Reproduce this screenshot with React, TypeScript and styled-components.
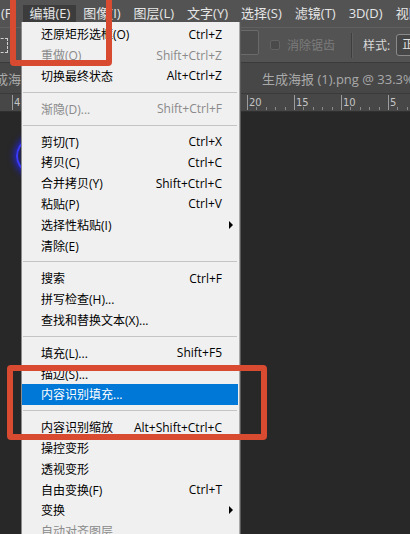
import React from "react";
import styled, { createGlobalStyle } from "styled-components";

const Global = createGlobalStyle`
  html, body { margin: 0; padding: 0; background: #282828; overflow: hidden; }
  #root { width: 410px; height: 534px; }
`;

const UI_FONT = `"Open Sans", "Noto Sans CJK SC", sans-serif`;

const Window = styled.div`
  position: relative;
  width: 410px;
  height: 534px;
  overflow: hidden;
  display: flex;
  flex-direction: column;
  background: #282828;
  font-family: ${UI_FONT};
`;

/* ---------- top menu bar ---------- */
const MenuBar = styled.div`
  flex: none;
  height: 28px;
  box-sizing: border-box;
  display: flex;
  align-items: flex-start;
  background: #535353;
  border-bottom: 1px solid #606060;
  & > * { flex: none; }
`;

const MenuTitle = styled.div<{ $active?: boolean; $shift?: number }>`
  margin-top: 5px;
  margin-left: ${(p) => p.$shift ?? 0}px;
  height: ${(p) => (p.$active ? 23 : 17)}px;
  padding: 0 6px;
  box-sizing: border-box;
  font-size: 13px;
  line-height: 17px;
  color: #e6e6e6;
  white-space: nowrap;
  background: ${(p) => (p.$active ? "#3c3c3c" : "transparent")};
`;

/* ---------- options bar ---------- */
const OptionsBar = styled.div`
  flex: none;
  height: 35px;
  box-sizing: border-box;
  display: flex;
  align-items: center;
  background: #535353;
  border-bottom: 1px solid #3a3a3a;
  font-size: 12px;
  & > * { flex: none; }
`;

const MarqueeIcon = styled.div`
  width: 14px;
  height: 13px;
  margin-left: -8px;
  border: 1px dashed #d0d0d0;
`;

const ChevronSmall = styled.svg`
  margin-left: 3px;
  margin-top: 4px;
`;

const FieldBox = styled.div`
  width: 27px;
  height: 25px;
  margin-left: 216px;
  align-self: flex-start;
  margin-top: 2px;
  box-sizing: border-box;
  border: 1px solid #6a6a6a;
  border-radius: 2px;
  background: #4c4c4c;
`;

const CheckBox = styled.div`
  width: 10px;
  height: 10px;
  margin-left: 11px;
  box-sizing: border-box;
  border: 1px solid #626262;
  border-radius: 2px;
  background: #4a4a4a;
`;

const OptLabel = styled.span<{ $disabled?: boolean; $gap: number }>`
  margin-left: ${(p) => p.$gap}px;
  color: ${(p) => (p.$disabled ? "#7c7c7c" : "#d8d8d8")};
  white-space: nowrap;
`;

const VSep = styled.div`
  width: 1px;
  height: 25px;
  margin-left: 16px;
  background: #3e3e3e;
  box-shadow: 1px 0 0 #5e5e5e;
`;

const SelectBox = styled.div`
  margin-left: 6px;
  width: 50px;
  height: 22px;
  box-sizing: border-box;
  border: 1px solid #8a8a8a;
  border-radius: 3px;
  background: #474747;
  color: #e2e2e2;
  padding-left: 5px;
  line-height: 20px;
  white-space: nowrap;
`;

/* ---------- document tabs ---------- */
const TabBar = styled.div`
  flex: none;
  height: 30px;
  display: flex;
  align-items: center;
  background: #474747;
  font-size: 13px;
  color: #a9a9a9;
  & > * { flex: none; }
`;

const DocTab = styled.div<{ $shift: number; $width?: number }>`
  margin-left: ${(p) => p.$shift}px;
  ${(p) => (p.$width ? `width: ${p.$width}px;` : "")}
  white-space: nowrap;
  overflow: hidden;
`;

/* ---------- ruler ---------- */
const RulerStrip = styled.div`
  flex: none;
  height: 17px;
  background: #474747;
  border-top: 1px solid #3a3a3a;
  border-bottom: 1px solid #303030;
`;

/* ---------- canvas ---------- */
const Canvas = styled.div`
  flex: 1;
  position: relative;
  background: #282828;
`;

const Glow = styled.div`
  position: absolute;
  left: 16px;
  top: 20px;
  width: 60px;
  height: 44px;
  border-radius: 50%;
  border: 2px solid #3a3aff;
  box-shadow: 0 0 6px 2px #2222cc, inset 0 0 6px #2222aa;
`;

/* ---------- dropdown menu ---------- */
const DropMenu = styled.div`
  position: absolute;
  left: 21px;
  top: 22px;
  width: 219px;
  box-sizing: border-box;
  padding-top: 2px;
  background: #f0f0f0;
  border-left: 1px solid #8c8c8c;
  border-right: 1px solid #a8a8a8;
  box-shadow: 1px 0 0 #5a5a5a;
  font-size: 12px;
`;

const Row = styled.div<{ $disabled?: boolean; $hot?: boolean }>`
  height: 20.8px;
  margin-right: 1px;
  display: grid;
  grid-template-columns: 1fr auto 16px;
  align-items: center;
  padding-left: 19px;
  color: ${(p) => (p.$hot ? "#ffffff" : p.$disabled ? "#8a8a8a" : "#000000")};
  background: ${(p) => (p.$hot ? "#0078d7" : "transparent")};
  white-space: nowrap;
`;

const Shortcut = styled.span`
  text-align: right;
`;

const SubArrow = styled.span`
  justify-self: center;
  width: 0;
  height: 0;
  border-top: 4px solid transparent;
  border-bottom: 4px solid transparent;
  border-left: 4px solid #000;
  margin-left: 1px;
`;

const Separator = styled.div`
  height: 12px;
  margin: 0 2px 0 1px;
  display: flex;
  align-items: center;
  &::after {
    content: "";
    flex: 1;
    height: 1px;
    background: #c4c4c4;
  }
`;

/* ---------- annotation boxes ---------- */
const Callout = styled.div<{ $x: number; $y: number; $w: number; $h: number }>`
  position: absolute;
  left: ${(p) => p.$x}px;
  top: ${(p) => p.$y}px;
  width: ${(p) => p.$w}px;
  height: ${(p) => p.$h}px;
  box-sizing: border-box;
  border: 6px solid #d84b30;
  border-radius: 4px;
  pointer-events: none;
`;

type Item =
  | { sep: true }
  | { label: string; key?: string; disabled?: boolean; hot?: boolean; sub?: boolean };

const items: Item[] = [
  { label: "还原矩形选框(O)", key: "Ctrl+Z" },
  { label: "重做(O)", key: "Shift+Ctrl+Z", disabled: true },
  { label: "切换最终状态", key: "Alt+Ctrl+Z" },
  { sep: true },
  { label: "渐隐(D)...", key: "Shift+Ctrl+F", disabled: true },
  { sep: true },
  { label: "剪切(T)", key: "Ctrl+X" },
  { label: "拷贝(C)", key: "Ctrl+C" },
  { label: "合并拷贝(Y)", key: "Shift+Ctrl+C" },
  { label: "粘贴(P)", key: "Ctrl+V" },
  { label: "选择性粘贴(I)", sub: true },
  { label: "清除(E)" },
  { sep: true },
  { label: "搜索", key: "Ctrl+F" },
  { label: "拼写检查(H)..." },
  { label: "查找和替换文本(X)..." },
  { sep: true },
  { label: "填充(L)...", key: "Shift+F5" },
  { label: "描边(S)..." },
  { label: "内容识别填充...", hot: true },
  { sep: true },
  { label: "内容识别缩放", key: "Alt+Shift+Ctrl+C" },
  { label: "操控变形" },
  { label: "透视变形" },
  { label: "自由变换(F)", key: "Ctrl+T" },
  { label: "变换", sub: true },
  { label: "自动对齐图层", disabled: true },
];

const menuTitles = ["(F)", "编辑(E)", "图像(I)", "图层(L)", "文字(Y)", "选择(S)", "滤镜(T)", "3D(D)", "视图(V)"];

function Ruler() {
  const labels = [45, 40, 35, 30, 25, 20, 15, 10, 5];
  const step = 47;
  const x0 = 12;
  const ticks: React.ReactNode[] = [];
  labels.forEach((n, i) => {
    const x = x0 + i * step;
    ticks.push(<line key={`M${i}`} x1={x + 0.5} y1={1} x2={x + 0.5} y2={16} stroke="#9c9c9c" strokeWidth={1} />);
    ticks.push(
      <text key={`T${i}`} x={x + 2} y={12} fontSize={10} fill="#c4c4c4" fontFamily='"DejaVu Sans", sans-serif'>
        {n}
      </text>
    );
    for (let j = 1; j < 5; j++) {
      const mx = Math.round(x + (j * step) / 5) + 0.5;
      ticks.push(<line key={`m${i}-${j}`} x1={mx} y1={13} x2={mx} y2={16} stroke="#8a8a8a" strokeWidth={1} />);
    }
  });
  return (
    <svg width={410} height={16} style={{ display: "block" }}>
      {ticks}
    </svg>
  );
}

export default function App() {
  return (
    <>
      <Global />
      <Window>
        <MenuBar>
          {menuTitles.map((t, i) => (
            <MenuTitle key={t} $active={i === 1} $shift={i === 0 ? -5 : i === 1 ? 2 : 1}>
              {t}
            </MenuTitle>
          ))}
        </MenuBar>

        <OptionsBar>
          <MarqueeIcon />
          <ChevronSmall width="5" height="4" viewBox="0 0 5 4">
            <polyline points="0.5,0.5 2.5,3 4.5,0.5" fill="none" stroke="#bdbdbd" strokeWidth="1" />
          </ChevronSmall>
          <FieldBox />
          <CheckBox />
          <OptLabel $disabled $gap={7}>消除锯齿</OptLabel>
          <VSep />
          <OptLabel $gap={11}>样式:</OptLabel>
          <SelectBox>正常</SelectBox>
        </OptionsBar>

        <TabBar>
          <DocTab $shift={-18} $width={270}>生成海报 (1).png</DocTab>
          <DocTab $shift={10}>生成海报 (1).png @ 33.3% (RGB/8)</DocTab>
        </TabBar>

        <RulerStrip>
          <Ruler />
        </RulerStrip>

        <Canvas>
          <Glow />
        </Canvas>

        <DropMenu>
          {items.map((it, i) =>
            "sep" in it ? (
              <Separator key={i} />
            ) : (
              <Row key={i} $disabled={it.disabled} $hot={it.hot}>
                <span>{it.label}</span>
                <Shortcut>{it.key ?? ""}</Shortcut>
                {it.sub ? <SubArrow /> : <span />}
              </Row>
            )
          )}
        </DropMenu>

        <Callout $x={10} $y={-12} $w={102} $h={78} />
        <Callout $x={7} $y={365} $w={260} $h={75} />
      </Window>
    </>
  );
}
